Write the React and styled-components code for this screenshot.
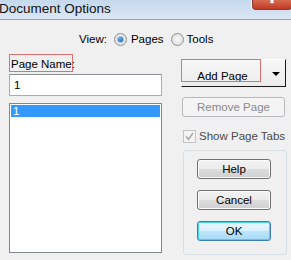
import styled, { createGlobalStyle } from "styled-components";

const GlobalStyle = createGlobalStyle`
  html, body {
    margin: 0;
    padding: 0;
  }
  body {
    width: 291px;
    height: 260px;
    overflow: hidden;
    background: #f0f0f0;
    font-family: "Liberation Sans", Arial, sans-serif;
    font-size: 11.5px;
    color: #000;
  }
`;

const Window = styled.div`
  width: 291px;
  height: 260px;
  display: flex;
  flex-direction: column;
  background: #f0f0f0;
  overflow: hidden;
`;

const TitleBar = styled.div`
  height: 19px;
  flex: none;
  display: flex;
  justify-content: space-between;
  align-items: flex-start;
  background: linear-gradient(#c5d8ed, #dbe7f4);
  border-bottom: 1px solid #8fa3b8;
`;

const Title = styled.div`
  font-size: 13.5px;
  line-height: 18px;
  margin-left: -1px;
  color: #111;
`;

const CloseButton = styled.div`
  width: 38px;
  height: 9px;
  margin-right: -1px;
  display: flex;
  justify-content: center;
  align-items: flex-start;
  background: linear-gradient(#d86a52, #c03b24);
  border: 1px solid #8d3a2b;
  border-top: none;
  border-radius: 0 0 4px 4px;
  box-shadow: -1px 0 0 #f4f8fc;
`;

const Body = styled.div`
  flex: 1;
  padding: 10px 4px 0 9px;
  display: flex;
  flex-direction: column;
`;

const ViewRow = styled.div`
  display: flex;
  align-items: center;
  height: 18px;
  padding-left: 70px;
`;

const Radio = styled.span`
  width: 11px;
  height: 11px;
  margin: ${(p) => p.$margin};
  border-radius: 50%;
  border: 1px solid #8e8f8f;
  background: radial-gradient(circle, #f6f6f6 0%, #dcdcdc 100%);
  display: flex;
  align-items: center;
  justify-content: center;
  flex: none;

  &::after {
    content: "";
    display: ${(p) => (p.$checked ? "block" : "none")};
    width: 5px;
    height: 5px;
    border-radius: 50%;
    background: radial-gradient(circle at 40% 35%, #6fb2e8, #184e8a);
    box-shadow: 0 0 0 1px #9cc2e4;
  }
`;

const Columns = styled.div`
  display: flex;
  margin-top: 6px;
`;

const LeftCol = styled.div`
  width: 153px;
  display: flex;
  flex-direction: column;
`;

const NameLabel = styled.div`
  align-self: flex-start;
  width: 64px;
  height: 18px;
  box-sizing: border-box;
  border: 1px solid #e07070;
  padding-left: 1px;
  line-height: 18px;
  white-space: nowrap;
  overflow: visible;
`;

const TextInput = styled.div`
  margin-top: 2px;
  height: 22px;
  box-sizing: border-box;
  border: 1px solid #abadb3;
  border-top-color: #8a8d94;
  background: #fff;
  padding-left: 4px;
  line-height: 20px;
`;

const ListBox = styled.div`
  margin-top: 7px;
  height: 150px;
  box-sizing: border-box;
  border: 1px solid #828790;
  background: #fff;
  padding: 1px;
`;

const ListItem = styled.div`
  height: 12px;
  line-height: 12px;
  padding-left: 2px;
  background: ${(p) => (p.$selected ? "#3399ff" : "transparent")};
  color: ${(p) => (p.$selected ? "#fff" : "#000")};
`;

const RightCol = styled.div`
  margin-left: 19px;
  width: 106px;
  padding-top: 5px;
  display: flex;
  flex-direction: column;
`;

const SplitButton = styled.div`
  position: relative;
  width: 105px;
  height: 28px;
  box-sizing: border-box;
  display: flex;
  border-top: 1px solid #fff;
  border-left: 1px solid #fff;
  border-right: 1px solid #1a1a1a;
  border-bottom: 1px solid #1a1a1a;
  background: linear-gradient(#f7f7f7, #ececec);
`;

const SplitMain = styled.div`
  width: 81px;
  display: flex;
  align-items: center;
  justify-content: center;
  padding-top: 5px;
  box-sizing: border-box;
`;

const SplitArrow = styled.div`
  flex: 1;
  display: flex;
  align-items: center;
  justify-content: center;
  padding-top: 2px;
  padding-left: 4px;

  &::after {
    content: "";
    border-left: 4px solid transparent;
    border-right: 4px solid transparent;
    border-top: 4px solid #000;
  }
`;

const Annotation = styled.div`
  position: absolute;
  left: -1px;
  top: -1px;
  width: 80px;
  height: 23px;
  box-sizing: border-box;
  border: 1px solid #e07070;
  pointer-events: none;
`;

const PushButton = styled.div`
  width: ${(p) => p.$width || "74px"};
  height: 20px;
  margin-left: ${(p) => p.$indent || "0"};
  box-sizing: border-box;
  display: flex;
  align-items: center;
  justify-content: center;
  border-radius: 3px;
  border: 1px solid ${(p) => (p.$default ? "#3c7fb1" : p.$disabled ? "#b5b9bc" : "#707070")};
  color: ${(p) => (p.$disabled ? "#8a8a8a" : "#000")};
  background: ${(p) =>
    p.$disabled
      ? "#f4f4f4"
      : p.$default
      ? "linear-gradient(#eaf6fd 0%, #d9f0fc 50%, #bee6fd 51%, #a7d9f5 100%)"
      : "linear-gradient(#f2f2f2 0%, #ebebeb 50%, #dddddd 51%, #cfcfcf 100%)"};
  box-shadow: ${(p) => (p.$default ? "inset 0 0 0 1px #48d3f5" : p.$disabled ? "none" : "inset 0 0 0 1px #fcfcfc")};
`;

const CheckRow = styled.div`
  margin-top: 12px;
  height: 14px;
  display: flex;
  align-items: center;
  padding-left: 2px;
  color: #4a4a4a;
  white-space: nowrap;
`;

const CheckBox = styled.span`
  width: 13px;
  height: 13px;
  flex: none;
  box-sizing: border-box;
  border: 1px solid #c2c4c6;
  background: #f4f4f4;
  margin-right: 3px;
  display: flex;
  align-items: center;
  justify-content: center;
`;

const GroupBox = styled.div`
  margin-top: 7px;
  margin-left: 2px;
  width: 104px;
  height: 105px;
  box-sizing: border-box;
  border: 1px solid #d5dfe5;
  border-radius: 3px;
  padding: 8px 0 0 13px;
  display: flex;
  flex-direction: column;
  gap: 11px;
`;

const Underline = styled.span`
  text-decoration: underline;
`;

export default function App() {
  return (
    <>
      <GlobalStyle />
      <Window>
        <TitleBar>
          <Title>Document Options</Title>
          <CloseButton>
            <svg width="10" height="4" viewBox="0 0 10 4">
              <path d="M2 -2 L5 1 L8 -2 M3.5 3 L5 1 L6.5 3" stroke="#fff" strokeWidth="1.6" fill="none" />
            </svg>
          </CloseButton>
        </TitleBar>
        <Body>
          <ViewRow>
            <span>View:</span>
            <Radio $checked $margin="0 4px 0 7px" />
            <span>Pages</span>
            <Radio $margin="0 3px 0 7px" />
            <span>Tools</span>
          </ViewRow>
          <Columns>
            <LeftCol>
              <NameLabel>Page Name:</NameLabel>
              <TextInput>1</TextInput>
              <ListBox>
                <ListItem $selected>1</ListItem>
              </ListBox>
            </LeftCol>
            <RightCol>
              <SplitButton>
                <SplitMain>
                  <span>
                    <Underline>A</Underline>dd Page
                  </span>
                </SplitMain>
                <SplitArrow />
                <Annotation />
              </SplitButton>
              <PushButton $disabled $width="103px" $indent="1px" style={{ marginTop: 10 }}>
                Remove Page
              </PushButton>
              <CheckRow>
                <CheckBox>
                  <svg width="9" height="9" viewBox="0 0 9 9">
                    <path d="M1 4.5 L3.5 7.5 L8 1" stroke="#a9abad" strokeWidth="1.5" fill="none" />
                  </svg>
                </CheckBox>
                Show Page Tabs
              </CheckRow>
              <GroupBox>
                <PushButton>Help</PushButton>
                <PushButton>Cancel</PushButton>
                <PushButton $default>OK</PushButton>
              </GroupBox>
            </RightCol>
          </Columns>
        </Body>
      </Window>
    </>
  );
}
